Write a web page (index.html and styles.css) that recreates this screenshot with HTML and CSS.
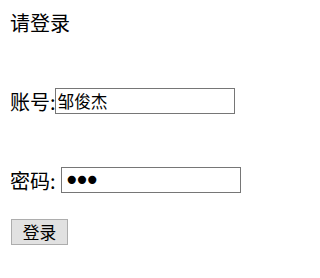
FILE: index.html
```html
<!DOCTYPE html>
<html lang="zh-CN">
<head>
<meta charset="utf-8">
<title>请登录</title>
<link rel="stylesheet" href="styles.css">
</head>
<body>
<div class="title">请登录</div>
<form class="login">
  <label class="row row-user"><span class="label">账号:</span><input class="field" type="text" value="邹俊杰"></label>
  <label class="row row-pass"><span class="label">密码:</span><input class="field field-pass" type="password" value="123"></label>
  <button class="submit" type="button">登录</button>
</form>
</body>
</html>
```
FILE: styles.css
```css
html, body {
  background: #ffffff;
}
body {
  margin: 10px;
  font-family: "Noto Sans CJK SC", "Noto Sans", sans-serif;
  font-size: 20px;
  color: #000000;
}
.title {
  line-height: 26px;
  height: 26px;
}
.login {
  margin: 0;
  display: flex;
  flex-direction: column;
  align-items: flex-start;
}
.row {
  display: flex;
  align-items: center;
  height: 26px;
}
.row-user {
  margin-top: 52px;
}
.row-pass {
  margin-top: 53px;
}
.label {
  line-height: 26px;
  padding-top: 2px;
}
.field {
  box-sizing: border-box;
  width: 180px;
  height: 26px;
  margin: 0 0 0 -1px;
  padding: 1px 2px;
  border: 1px solid #767676;
  border-radius: 0;
  background: #ffffff;
  font-family: "Noto Sans CJK SC", "Noto Sans", sans-serif;
  font-size: 16.67px;
  color: #000000;
  outline: none;
}
.field-pass {
  margin-left: 5px;
  padding: 0 2px;
  font-family: "DejaVu Sans", sans-serif;
  font-size: 28px;
  line-height: 24px;
  letter-spacing: -6.3px;
}
.submit {
  box-sizing: border-box;
  margin-top: 26px;
  margin-left: 1px;
  width: 57px;
  height: 26px;
  padding: 0;
  border: 1px solid #adadad;
  border-radius: 0;
  background: #e1e1e1;
  font-family: "Noto Sans CJK SC", "Noto Sans", sans-serif;
  font-size: 16.67px;
  color: #000000;
}
```
